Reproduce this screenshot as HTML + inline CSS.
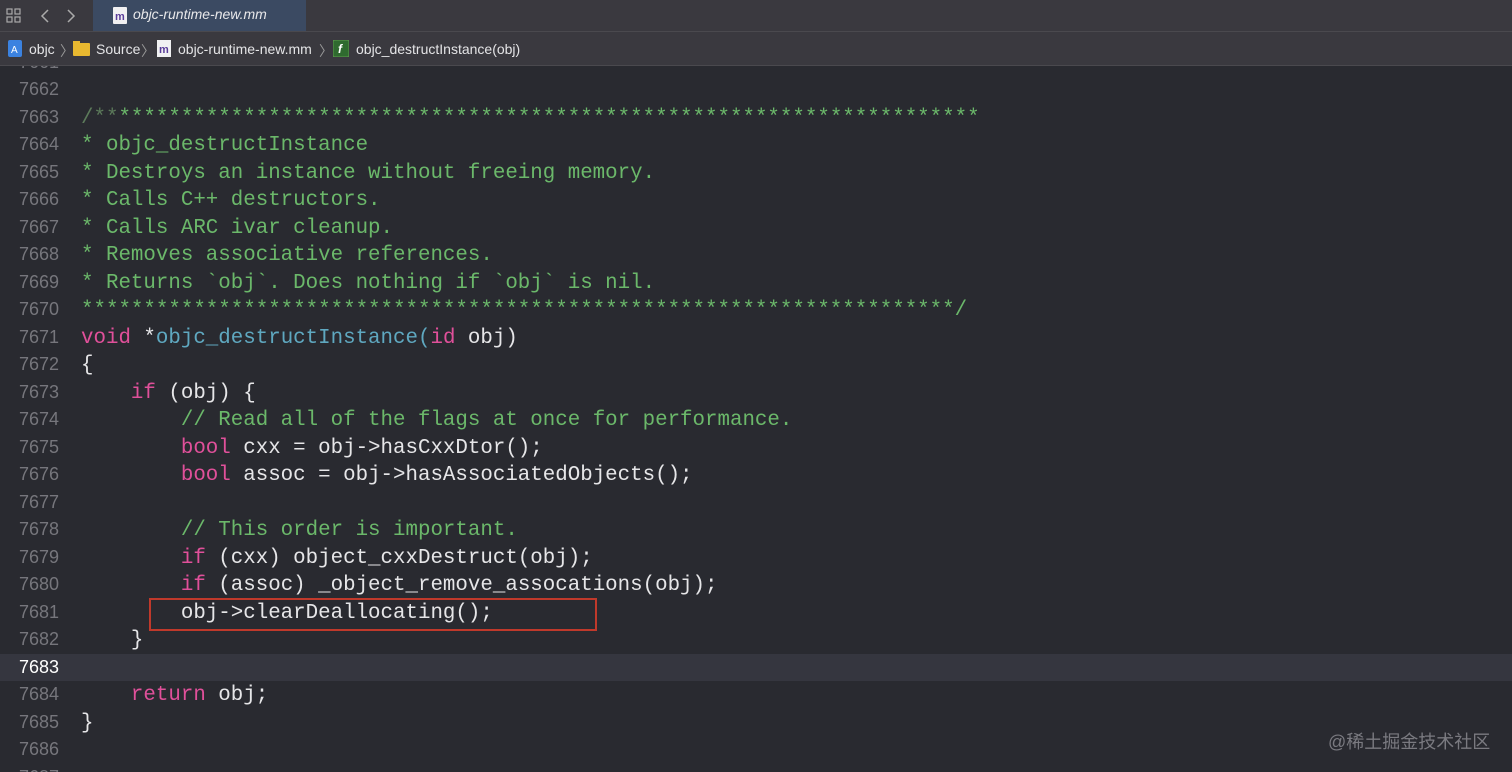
<!DOCTYPE html>
<html><head><meta charset="utf-8"><style>
body{margin:0;width:1512px;height:772px;overflow:hidden;background:#292a30;font-family:"Liberation Sans",sans-serif;position:relative}
.tabbar{position:absolute;left:0;top:0;width:1512px;height:31px;background:#3a393f;border-bottom:1px solid #4a494e}
.tab{position:absolute;left:93px;top:0;width:213px;height:31px;background:#3b4a62}
.tab span{position:absolute;left:40px;top:6px;font-style:italic;color:#e8e8ea;font-size:14px}
.crumbs{position:absolute;left:0;top:32px;width:1512px;height:33px;background:#3a393f;border-bottom:1px solid #4a494e;color:#e4e4e6;font-size:14px}
.crumbs span{position:absolute;top:9px}
.code{position:absolute;left:0;top:66px;width:1512px;height:706px;overflow:hidden}
.ln{position:absolute;left:0;width:1512px;height:27.5px;line-height:27.5px}
.n{position:absolute;right:1453px;font-size:18px;color:#76767c;font-family:"Liberation Sans",sans-serif}
.t{position:absolute;left:81px;top:1px;font-family:"Liberation Mono",monospace;font-size:20.8px;color:#e6e6e8;white-space:pre}
.c{color:#6bb86a}.k{color:#e0509a}.f{color:#5fa8c0}.g{color:#5c7a5a}
.hl{background:#35363f}
.box{position:absolute;left:149px;top:598px;width:448px;height:33px;border:2px solid #c0392b;box-sizing:border-box}
.wm{position:absolute;left:1328px;top:728px;font-family:"Liberation Sans","Noto Sans CJK SC",sans-serif;font-size:18px;color:#7a7a80}
</style></head><body>
<div class="tabbar">
<svg style="position:absolute;left:6px;top:8px" width="16" height="16"><g fill="none" stroke="#aaa" stroke-width="1.2"><rect x="1" y="1" width="5" height="5"/><rect x="9" y="1" width="5" height="5"/><rect x="1" y="9" width="5" height="5"/><rect x="9" y="9" width="5" height="5"/></g></svg>
<svg style="position:absolute;left:38px;top:8px" width="50" height="16"><path d="M10 2 L4 8 L10 14 M30 2 L36 8 L30 14" fill="none" stroke="#aaa" stroke-width="1.5"/></svg>
<div class="tab"><svg style="position:absolute;left:20px;top:7px" width="14" height="17"><rect width="14" height="17" fill="#f0f0f2" rx="1"/><text x="2" y="13" font-size="11" fill="#5a3d9a" font-family="Liberation Sans" font-weight="bold">m</text></svg><span>objc-runtime-new.mm</span></div>
</div>
<div class="crumbs">
<svg style="position:absolute;left:8px;top:8px" width="14" height="17"><rect width="14" height="17" rx="2" fill="#3b82e0"/><text x="3" y="13" font-size="10" fill="#fff">A</text></svg>
<span style="left:29px">objc</span><span style="left:60px;color:#999">〉</span>
<svg style="position:absolute;left:73px;top:9px" width="17" height="15"><rect y="2" width="17" height="13" rx="1" fill="#e8b830"/><rect width="7" height="3" fill="#e8b830"/></svg>
<span style="left:96px">Source</span><span style="left:141px;color:#999">〉</span>
<svg style="position:absolute;left:157px;top:8px" width="14" height="17"><rect width="14" height="17" fill="#f0f0f2"/><text x="2" y="13" font-size="11" fill="#5a3d9a" font-weight="bold">m</text></svg>
<span style="left:178px">objc-runtime-new.mm</span><span style="left:319px;color:#999">〉</span>
<svg style="position:absolute;left:333px;top:8px" width="16" height="17"><rect width="16" height="17" rx="2" fill="#2f6a2f" stroke="#5c9c4c"/><text x="5" y="13" font-size="12" fill="#fff" font-style="italic" font-weight="bold">f</text></svg>
<span style="left:356px">objc_destructInstance(obj)</span>
</div>
<div class="code">
<div class="ln" style="top:-17px"><span class="n">7661</span></div>
<div class="ln" style="top:10px"><span class="n">7662</span></div>
<div class="ln" style="top:37.5px"><span class="n">7663</span><span class="t c"><span class="g">/**</span>*********************************************************************</span></div>
<div class="ln" style="top:65px"><span class="n">7664</span><span class="t c">* objc_destructInstance</span></div>
<div class="ln" style="top:92.5px"><span class="n">7665</span><span class="t c">* Destroys an instance without freeing memory.</span></div>
<div class="ln" style="top:120px"><span class="n">7666</span><span class="t c">* Calls C++ destructors.</span></div>
<div class="ln" style="top:147.5px"><span class="n">7667</span><span class="t c">* Calls ARC ivar cleanup.</span></div>
<div class="ln" style="top:175px"><span class="n">7668</span><span class="t c">* Removes associative references.</span></div>
<div class="ln" style="top:202.5px"><span class="n">7669</span><span class="t c">* Returns `obj`. Does nothing if `obj` is nil.</span></div>
<div class="ln" style="top:230px"><span class="n">7670</span><span class="t c">**********************************************************************/</span></div>
<div class="ln" style="top:257.5px"><span class="n">7671</span><span class="t"><span class="k">void</span> *<span class="f">objc_destructInstance(</span><span class="k">id</span> obj)</span></div>
<div class="ln" style="top:285px"><span class="n">7672</span><span class="t">{</span></div>
<div class="ln" style="top:312.5px"><span class="n">7673</span><span class="t">    <span class="k">if</span> (obj) {</span></div>
<div class="ln" style="top:340px"><span class="n">7674</span><span class="t">        <span class="c">// Read all of the flags at once for performance.</span></span></div>
<div class="ln" style="top:367.5px"><span class="n">7675</span><span class="t">        <span class="k">bool</span> cxx = obj-&gt;hasCxxDtor();</span></div>
<div class="ln" style="top:395px"><span class="n">7676</span><span class="t">        <span class="k">bool</span> assoc = obj-&gt;hasAssociatedObjects();</span></div>
<div class="ln" style="top:422.5px"><span class="n">7677</span></div>
<div class="ln" style="top:450px"><span class="n">7678</span><span class="t">        <span class="c">// This order is important.</span></span></div>
<div class="ln" style="top:477.5px"><span class="n">7679</span><span class="t">        <span class="k">if</span> (cxx) object_cxxDestruct(obj);</span></div>
<div class="ln" style="top:505px"><span class="n">7680</span><span class="t">        <span class="k">if</span> (assoc) _object_remove_assocations(obj);</span></div>
<div class="ln" style="top:532.5px"><span class="n">7681</span><span class="t">        obj-&gt;clearDeallocating();</span></div>
<div class="ln" style="top:560px"><span class="n">7682</span><span class="t">    }</span></div>
<div class="ln hl" style="top:587.5px"><span class="n" style="color:#fff">7683</span></div>
<div class="ln" style="top:615px"><span class="n">7684</span><span class="t">    <span class="k">return</span> obj;</span></div>
<div class="ln" style="top:642.5px"><span class="n">7685</span><span class="t">}</span></div>
<div class="ln" style="top:670px"><span class="n">7686</span></div>
<div class="ln" style="top:697.5px"><span class="n">7687</span></div>
</div>
<div class="box"></div>
<div class="wm">@稀土掘金技术社区</div>
</body></html>
